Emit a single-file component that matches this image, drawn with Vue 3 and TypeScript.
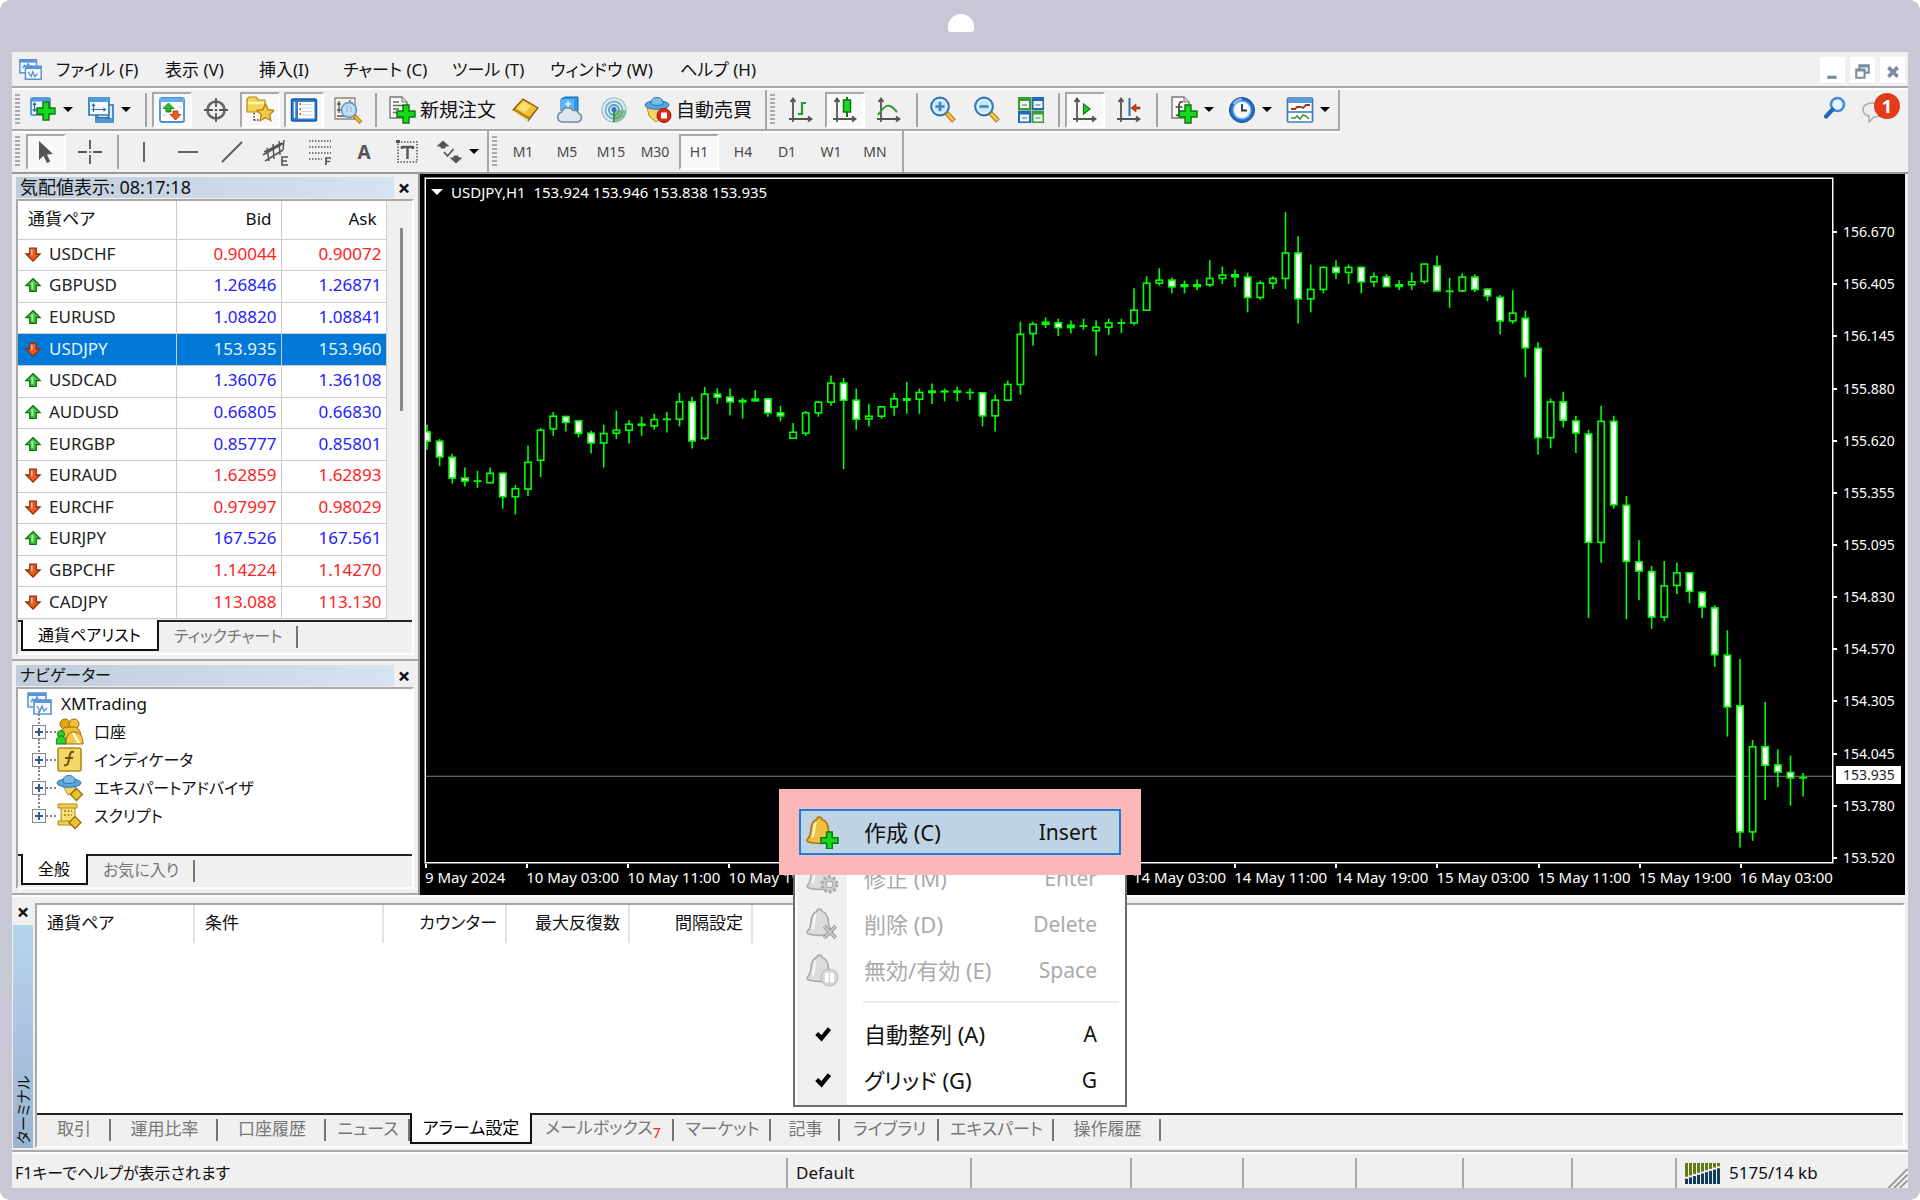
<script setup lang="ts">
import { computed, ref } from 'vue'

type Direction = 'up' | 'down'
interface Quote { symbol: string; bid: string; ask: string; dir: Direction }
interface Tool { id: string; label: string; text?: string; caret?: boolean }
type Kind = 'w' | 'h' | 'd'
type Candle = [Kind, number, number, number, number]

const plus = (x: number, y: number, s: number): string => {
  const t = s / 3
  return `<path d="M${x + t} ${y}h${t}v${t}h${t}v${t}h${-t}v${t}h${-t}v${-t}h${-t}v${-t}h${t}z" fill="#18d81c" stroke="#08780c" stroke-width="1.4"/>`
}
const axes = '<path d="M6 3v23M2 23h22M3.500 6L6 2.500 8.500 6M21 20.500L24.500 23 21 25.500" fill="none" stroke="#555" stroke-width="1.8"/>'
const page = '<path d="M2 1h12l5 5v16H2z" fill="#fafafa" stroke="#777" stroke-width="1.400"/><path d="M14 1v5h5" fill="#ddd" stroke="#777"/>'
const lens = '<circle cx="11" cy="10.500" r="8.800" fill="#c5e5fa" stroke="#3479b8" stroke-width="2.200"/><circle cx="11" cy="10.500" r="6.800" fill="none" stroke="#eef8ff" stroke-width="1.200"/><path d="M17.500 17l7.500 8" stroke="#a87610" stroke-width="5"/><path d="M18 17.500l6.500 7" stroke="#f5c842" stroke-width="3"/>'
const bell = (fill: string, stroke: string): string =>
  `<path d="M13.500 2c1.600 0 2.400.9 2.600 2.200 5 1.400 5.800 6 6 10 .2 4 1.200 6.500 3.400 8.300 1 .9.800 2.500-1 3C19 27.300 8.500 27.300 3.500 25.500 1.800 25 1.600 23.600 2.600 22.500 5 20 5.200 17.500 5.500 14 5.800 9.500 6.800 5.500 11 4.200 11.200 2.900 12 2 13.500 2z" fill="${fill}" stroke="${stroke}" stroke-width="1.500"/><path d="M10 7C8.500 11 8.800 17 7 21" fill="none" stroke="#fff" stroke-opacity=".7" stroke-width="2.400"/>`
const hat = '<ellipse cx="13" cy="9" rx="12" ry="4.300" fill="#58a6dc" stroke="#2b72ad"/><path d="M7 8C7 3 9.500 1.500 13 1.500S19 3 19 8c-3 2-9 2-12 0z" fill="#78bdea" stroke="#2b72ad"/>'
const windows = (c: string): string =>
  `<path d="M2 3h18v14H2z" fill="#eef6fe" stroke="${c}" stroke-width="1.600"/><path d="M2 3h18v3H2z" fill="${c}"/><path d="M5 12l2-3 2 2 2-4 2 4 2-2" fill="none" stroke="${c}" stroke-width="1.400"/><path d="M8 10h17v14H8z" fill="#f7fbff" stroke="${c}" stroke-width="1.600"/><path d="M8 10h17v3H8z" fill="${c}"/><path d="M11 16l3 5 2-5 2 5 3-3" fill="none" stroke="${c}" stroke-width="1.400"/>`

const icons: Record<string, string> = {
  app: windows('#5a93d6'),
  newchart: `<rect x="2" y="2" width="19" height="17" rx="1" fill="#eaf4fd" stroke="#3f82c4" stroke-width="1.600"/><path d="M2 2h19v3.500H2z" fill="#4f9ae0"/><path d="M5.500 7v9M3.500 14h12M4 9l1.500-2L7 9" fill="none" stroke="#3c6e9c" stroke-width="1.300"/>${plus(8, 6, 18)}`,
  profiles: '<path d="M9 9h17v17H9z" fill="#e2effb" stroke="#2f78bd" stroke-width="1.700"/><path d="M9 22h17v4H9z" fill="#4f97da"/><path d="M2 2h20v17H2z" fill="#f4f9fe" stroke="#2f78bd" stroke-width="1.700"/><path d="M2 2h20v4H2z" fill="#4f9ae0"/><path d="M6.500 8v8M4.500 13.500h14M5 10l1.500-2L8 10M16.500 12l2 1.500-2 1.500M11 19v4M9 21.500h13M20.500 20l2 1.500-2 1.500" fill="none" stroke="#3c6e9c" stroke-width="1.200"/>',
  market: '<rect x="2" y="2" width="24" height="24" rx="2" fill="#fff" stroke="#4a90d0" stroke-width="1.800"/><path d="M2 2h24v4H2z" fill="#64b0ec"/><path d="M10.500 7l5.500 5.500h-3V16H8v-3.500H5z" fill="#2cb82c" stroke="#137013" stroke-width=".8"/><path d="M17.500 24L12 18.500h3V15h5v3.500h3z" fill="#ef5a1d" stroke="#a33105" stroke-width=".8"/><path d="M4 10h2M4 19h5M19 11h5" stroke="#ccc"/>',
  crosshair: '<circle cx="14" cy="14" r="8.500" fill="none" stroke="#666" stroke-width="2.600"/><path d="M14 2v9M14 17v9M2 14h9M17 14h9" stroke="#555" stroke-width="1.800"/><circle cx="14" cy="14" r="1.300" fill="#555"/>',
  star: '<path d="M1 3l2-2h7l2 3h7v12H1z" fill="#f3d35a" stroke="#b98a14" stroke-width="1.200"/><path d="M2 7h16" stroke="#fff3b0" stroke-width="2.500"/><path d="M8 17v9M8 24h7" stroke="#333" stroke-width="1.400" stroke-dasharray="1.500 1.500"/><path d="M19.500 8l2.700 5.600 6 .8-4.400 4.200 1.100 6.100-5.400-3-5.400 3 1.100-6.100-4.400-4.200 6-.8z" fill="#f2c945" stroke="#ad7e10" stroke-width="1.200"/>',
  data: '<rect x="1.500" y="3" width="25" height="22" rx="1.500" fill="#2d7cc8" stroke="#1b5a9b" stroke-width="1.500"/><path d="M8 6h16.500v16.500H8z" fill="#fff"/><path d="M4.500 6v16" stroke="#e9f4ff" stroke-width="1.600"/><path d="M11.500 8.500h11M11.500 12h11M11.500 15.500h11M11.500 19h11" stroke="#c5d5e5"/><path d="M9.500 7H11v2H9.500zM9.500 12H11v2H9.500zM9.500 17H11v2H9.500z" fill="#e33"/>',
  tester: '<path d="M1 2h20v21H1z" fill="#f5f2ec" stroke="#8e867c" stroke-width="1.300"/><path d="M5 5v12M3 8h4M3 14h4M16 4v8M13.500 7h5M3 20h15" stroke="#555" stroke-width="1.300"/><circle cx="15" cy="14" r="7.500" fill="#bcdcf6" fill-opacity=".9" stroke="#5b9bd0" stroke-width="1.600"/><path d="M13 9v7M17 11v5" stroke="#8db4d4"/><path d="M20 19.500l7 7" stroke="#a87610" stroke-width="4"/><path d="M20.500 20l6 6" stroke="#f2b62e" stroke-width="2.400"/>',
  order: `${page}<path d="M5 6h6M5 9.500h10M5 13h6M5 16.500h4" stroke="#666" stroke-width="1.500"/>${plus(9, 9, 18)}`,
  gold: '<path d="M1 14L11 3l15 9-10 13z" fill="#b97c17" stroke="#8a5508" stroke-width="1.200"/><path d="M3 13L11 4l14 8-8 9z" fill="#f0c02f"/><path d="M5 12.500L11.500 5.500 19 10l-6 7z" fill="#f9e06a"/><path d="M1 15l15 9.500" stroke="#f7e4a0" stroke-width="2"/>',
  cloud: '<path d="M5 3l4-2h13v14H5z" fill="#2f96ea" stroke="#1766b0"/><path d="M5 3h13v12H5z" fill="#5bb6f6"/><path d="M9 8h6M12 5v6" stroke="#e8f6ff" stroke-width="1.600"/><path d="M6 26a5 5 0 01-.5-9.800A6.500 6.500 0 0117 14.500a5 5 0 015.500 2.700A4.600 4.600 0 0122 26z" fill="#dde5ee" stroke="#7488a3" stroke-width="1.500"/>',
  radio: '<circle cx="14" cy="14" r="12" fill="#e3eef4" stroke="#a3c8d2" stroke-width="1.600"/><circle cx="14" cy="14" r="8.500" fill="none" stroke="#79b0d0" stroke-width="1.800"/><circle cx="14" cy="14" r="5" fill="none" stroke="#4e93c4" stroke-width="1.800"/><path d="M14 14h12a12 12 0 01-12 12z" fill="#59aa4e" fill-opacity=".6"/><path d="M14 14v12" stroke="#2f9a2f" stroke-width="2"/><circle cx="14" cy="13.500" r="2.600" fill="#2f76c0"/>',
  expert: `<path d="M3 11h19l-2 9-8 6-7-6z" fill="#f2d565" stroke="#b38a1c"/>${hat}<circle cx="20" cy="19.500" r="7" fill="#dc2a12" stroke="#a01a08"/><rect x="17" y="16.500" width="6" height="6" fill="#fff"/>`,
  bars: `${axes}<path d="M15 6v13M15 7h4M11 18h4" fill="none" stroke="#2a9a2a" stroke-width="2.200"/>`,
  candles: `${axes}<path d="M16 1v20" stroke="#087a0b" stroke-width="2"/><rect x="12.500" y="4" width="7" height="12" fill="#20d828" stroke="#087a0b" stroke-width="1.500"/>`,
  line: `${axes}<path d="M3 19c4-6 8-11 12-9 3 1 5 4 7 6" fill="none" stroke="#2a9a2a" stroke-width="2"/>`,
  zoomin: `${lens}<path d="M6.500 10.500h9M11 6v9" stroke="#3f83bc" stroke-width="2.600"/>`,
  zoomout: `${lens}<path d="M6.500 10.500h9" stroke="#3f83bc" stroke-width="2.600"/>`,
  tiles: '<path d="M1 1h13v13H1z" fill="#3d9a2e"/><path d="M14.500 1H27v13H14.500z" fill="#2468bd"/><path d="M1 14.500h13V27H1z" fill="#2468bd"/><path d="M14.500 14.500H27V27H14.500z" fill="#3d9a2e"/><path d="M3 5h9v7H3zM16.500 5h9v7h-9zM3 18.500h9v7H3zM16.500 18.500h9v7h-9z" fill="#eef5ee"/><path d="M5 9h5M18.500 9h5M5 22h5M18.500 22h5" stroke="#7aa3c4" stroke-width="1.500"/>',
  autoscroll: `${axes}<path d="M12.500 8l6.500 5-6.500 5z" fill="#28c728" stroke="#127a12" stroke-width="1.200"/>`,
  shift: `${axes}<path d="M14.500 2v18" stroke="#2d6fb4" stroke-width="2"/><path d="M16 12l5-4v3h4v2h-4v3z" fill="#c6400f" stroke="#8d2a05" stroke-width=".6"/>`,
  indicators: `${page}<path d="M13 6c-3-1-4 1-4 4v7c0 2-1 3-3 2M5.500 11h7" fill="none" stroke="#444" stroke-width="1.700"/>${plus(9, 9, 18)}`,
  clock: '<circle cx="14" cy="14" r="12.500" fill="#1e6fc8" stroke="#124e94"/><circle cx="14" cy="14" r="8.800" fill="#f3f8fd" stroke="#7db6ea" stroke-width="1.400"/><path d="M14 8v6.500h5" fill="none" stroke="#333" stroke-width="1.800"/><path d="M5.500 8A11 11 0 0114 3" fill="none" stroke="#8cc3f5" stroke-width="2"/>',
  template: '<rect x="1.500" y="2" width="25" height="24" rx="1" fill="#fff" stroke="#3c7dbd" stroke-width="1.700"/><path d="M2 2h24v5H2z" fill="#5a9cda"/><path d="M2 16h24" stroke="#3c7dbd" stroke-width="1.600"/><path d="M5 13h4l2-2h4l2 1 3-3h4" fill="none" stroke="#a33415" stroke-width="1.800"/><path d="M5 22h4l2-2 3 3 3-4 3 1 3 3" fill="none" stroke="#3a9a3a" stroke-width="1.600"/>',
  cursor: '<path d="M7 3v19l4.500-4.200L15 25l3.200-1.500-3.300-7L21 16z" fill="#555"/>',
  cross: '<path d="M14 2v9M14 17v9M2 14h9M17 14h9" stroke="#555" stroke-width="1.800"/><circle cx="14" cy="14" r="1" fill="#555"/>',
  vline: '<path d="M14 4v20" stroke="#555" stroke-width="1.800"/>',
  hline: '<path d="M4 14h20" stroke="#555" stroke-width="1.800"/>',
  trend: '<path d="M4 24L24 4" stroke="#555" stroke-width="1.800"/>',
  channel: '<path d="M1 17L22 5M3 23L21 12M5 10l2 13M11 6l1 15M17 3l1 14M22 2l-1 10M2 14l18-9" fill="none" stroke="#555" stroke-width="1.500"/><path d="M26 19h-6v8h6M20 23h5" fill="none" stroke="#555" stroke-width="1.600"/>',
  fibo: '<path d="M3 3h22M3 9h22M3 15h22M3 21h13" stroke="#555" stroke-width="1.600" stroke-dasharray="1.500 1.500"/><path d="M25 20h-5v7M20 23.500h4" fill="none" stroke="#555" stroke-width="1.700"/>',
  label: '<rect x="4" y="4" width="19" height="20" fill="none" stroke="#555" stroke-width="1.500" stroke-dasharray="1.500 1.500"/><path d="M8 9h11M13.500 9v12M8 8v3M19 8v3" fill="none" stroke="#555" stroke-width="2.400"/><path d="M2 2h4v3H2z" fill="#555"/>',
  shapes: '<path d="M8 3l5.500 5H10v2H6V8H2.500zM21 25l-5.500-5H19v-2h4v2h3.500z" fill="#555" stroke="#555"/><path d="M9 14l3.500 4 6-7" fill="none" stroke="#555" stroke-width="1.800"/>',
  search: '<circle cx="17.500" cy="9.500" r="6.500" fill="#eaf6ff" stroke="#3f8edb" stroke-width="2.600"/><path d="M12.500 14.500L6 21.500" stroke="#2166b8" stroke-width="4.200" stroke-linecap="round"/>',
  bubble: '<path d="M11 8c6 0 10 2 10 7s-4 7-9 7l-5 5v-6C3 20 1 18 1 15c0-5 4-7 10-7z" fill="#eceef2" stroke="#aaa" stroke-width="1.400"/>',
  down: '<path d="M14 25L3 14h6V5h10v9h6z" fill="#ee5a22" stroke="#8f2f08" stroke-width="2"/><path d="M12 7v9" stroke="#ffb08a" stroke-width="3"/>',
  up: '<path d="M14 4l11 11h-6v9H9v-9H3z" fill="#3cc83c" stroke="#0d6d12" stroke-width="2"/><path d="M13 9v11" stroke="#a8f0a0" stroke-width="3"/>',
  accounts: '<circle cx="9" cy="6" r="5" fill="#e3a91b" stroke="#9a6a08"/><circle cx="18" cy="6" r="5" fill="#f0c23c" stroke="#9a6a08"/><path d="M4 20c0-8 3-11 8-11h6c5 0 7 5 7 11z" fill="#eebc34" stroke="#9a6a08"/><circle cx="5" cy="16" r="3.500" fill="#2fd12f" stroke="#0c7c10"/><path d="M0 26c0-6 2-8 5-8s5 3 5 8z" fill="#2fd12f" stroke="#0c7c10"/><path d="M10 26c0-8 3-12 8-12 6 0 9 4 9 12z" fill="#f3ca4c" stroke="#9a6a08"/><path d="M17 15l6 10" stroke="#fff" stroke-width="2"/>',
  func: '<rect x="2" y="2" width="23" height="23" rx="2" fill="#f3d768" stroke="#b58a15" stroke-width="1.600"/><path d="M18 6c-4-1-4 2-5 7s-1 7-5 6M9 12h8" fill="none" stroke="#6d5108" stroke-width="2"/>',
  advisor: `<path d="M6 10h15l-3 7-6 4z" fill="#f2d565" stroke="#b38a1c"/>${hat}<path d="M20.500 14.500l6 6-6 6-6-6z" fill="#edc12e" stroke="#94700f" stroke-width="1.300"/>`,
  script: '<path d="M5 4h14v17H5z" fill="#f6e07c" stroke="#b58a15"/><path d="M2 2h19v4H2zM2 19h16v4H2z" fill="#efcf54" stroke="#b58a15"/><path d="M8 9h8M8 13h8" stroke="#a07a18" stroke-width="1.600" stroke-dasharray="2 1.500"/><path d="M19 14.500l6 6-6 6-6-6z" fill="#edc12e" stroke="#94700f" stroke-width="1.300"/>',
  bellAdd: `${bell('#f0c040', '#b1760b')}${plus(15, 16, 16)}`,
  bellEdit: `${bell('#dcdcdc', '#aaa')}<circle cx="23" cy="22" r="7" fill="#ccc" stroke="#aaa" stroke-width="3" stroke-dasharray="2.500 2"/><circle cx="23" cy="22" r="3" fill="#eee" stroke="#aaa"/>`,
  bellRemove: `${bell('#dcdcdc', '#aaa')}<path d="M18 18l11 11M29 18L18 29" stroke="#999" stroke-width="3.500"/><path d="M18 18l11 11M29 18L18 29" stroke="#ccc" stroke-width="1.500"/>`,
  bellPause: `${bell('#dcdcdc', '#aaa')}<circle cx="23" cy="23" r="8" fill="#d8d8d8" stroke="#bbb"/><path d="M20.500 18.500v9M25.500 18.500v9" stroke="#fff" stroke-width="3.500"/>`,
  check: '<path d="M11 15.500l4.500 4.500L23 11" fill="none" stroke="#000" stroke-width="4"/>',
}

const menus = ['ファイル (F)', '表示 (V)', '挿入(I)', 'チャート (C)', 'ツール (T)', 'ウィンドウ (W)', 'ヘルプ (H)']

const standardTools: Tool[][] = [
  [
    { id: 'newchart', label: '新規チャート', caret: true },
    { id: 'profiles', label: 'チャートの組表示', caret: true },
  ],
  [
    { id: 'market', label: '気配値表示' },
    { id: 'crosshair', label: 'データウィンドウ' },
    { id: 'star', label: 'ナビゲーター' },
    { id: 'data', label: 'ターミナル' },
    { id: 'tester', label: 'ストラテジーテスター' },
  ],
  [
    { id: 'order', label: '新規注文', text: '新規注文' },
    { id: 'gold', label: 'メタエディター' },
    { id: 'cloud', label: 'クラウド' },
    { id: 'radio', label: 'シグナル' },
    { id: 'expert', label: '自動売買', text: '自動売買' },
  ],
]
const chartTools: Tool[][] = [
  [
    { id: 'bars', label: 'バーチャート' },
    { id: 'candles', label: 'ローソク足' },
    { id: 'line', label: 'ラインチャート' },
  ],
  [
    { id: 'zoomin', label: '拡大' },
    { id: 'zoomout', label: '縮小' },
    { id: 'tiles', label: '整列' },
  ],
  [
    { id: 'autoscroll', label: '自動スクロール' },
    { id: 'shift', label: 'チャートシフト' },
  ],
  [
    { id: 'indicators', label: 'インディケータ', caret: true },
    { id: 'clock', label: '時間足設定', caret: true },
    { id: 'template', label: '定型チャート', caret: true },
  ],
]
const lineTools: Tool[][] = [
  [
    { id: 'cursor', label: 'カーソル' },
    { id: 'cross', label: 'クロスヘアカーソル' },
  ],
  [
    { id: 'vline', label: '垂直線' },
    { id: 'hline', label: '水平線' },
    { id: 'trend', label: 'トレンドライン' },
    { id: 'channel', label: 'チャネル' },
    { id: 'fibo', label: 'フィボナッチ' },
    { id: 'text', label: 'テキスト' },
    { id: 'label', label: 'ラベル' },
    { id: 'shapes', label: '矢印', caret: true },
  ],
]
const pressed = ref(new Set(['market', 'star', 'data', 'candles', 'autoscroll', 'cursor']))
const periods = ['M1', 'M5', 'M15', 'M30', 'H1', 'H4', 'D1', 'W1', 'MN']
const period = ref('H1')

const quotes: Quote[] = [
  { symbol: 'USDCHF', bid: '0.90044', ask: '0.90072', dir: 'down' },
  { symbol: 'GBPUSD', bid: '1.26846', ask: '1.26871', dir: 'up' },
  { symbol: 'EURUSD', bid: '1.08820', ask: '1.08841', dir: 'up' },
  { symbol: 'USDJPY', bid: '153.935', ask: '153.960', dir: 'down' },
  { symbol: 'USDCAD', bid: '1.36076', ask: '1.36108', dir: 'up' },
  { symbol: 'AUDUSD', bid: '0.66805', ask: '0.66830', dir: 'up' },
  { symbol: 'EURGBP', bid: '0.85777', ask: '0.85801', dir: 'up' },
  { symbol: 'EURAUD', bid: '1.62859', ask: '1.62893', dir: 'down' },
  { symbol: 'EURCHF', bid: '0.97997', ask: '0.98029', dir: 'down' },
  { symbol: 'EURJPY', bid: '167.526', ask: '167.561', dir: 'up' },
  { symbol: 'GBPCHF', bid: '1.14224', ask: '1.14270', dir: 'down' },
  { symbol: 'CADJPY', bid: '113.088', ask: '113.130', dir: 'down' },
]
const selected = ref('USDJPY')

const navItems = [
  { icon: 'accounts', label: '口座' },
  { icon: 'func', label: 'インディケータ' },
  { icon: 'advisor', label: 'エキスパートアドバイザ' },
  { icon: 'script', label: 'スクリプト' },
]

/* Candles are [kind, high, body top, body bottom, low]; w = bearish, h = bullish, d = doji.
   Each session has its own origin and units per pixel. */
const sessions: { origin: number; units: number; rows: Candle[] }[] = [
  {
    origin: 171,
    units: 3,
    rows: [
      ['w', 222, 242, 273, 297], ['w', 265, 270, 320, 346], ['w', 309, 318, 383, 398], ['w', 350, 380, 392, 407],
      ['d', 360, 389, 392, 411], ['h', 350, 366, 397, 397], ['w', 364, 366, 439, 473], ['h', 402, 412, 439, 491],
      ['h', 284, 333, 416, 435], ['h', 232, 237, 330, 379], ['h', 184, 195, 236, 255], ['w', 195, 196, 216, 242],
      ['w', 208, 209, 249, 260], ['w', 240, 246, 278, 308], ['h', 222, 247, 278, 350], ['h', 180, 237, 249, 265],
      ['h', 208, 219, 240, 278], ['d', 198, 219, 225, 255], ['h', 189, 205, 227, 237], ['d', 184, 204, 206, 245],
      ['h', 127, 152, 207, 227], ['w', 138, 152, 272, 293], ['h', 109, 129, 264, 269], ['w', 113, 129, 141, 160],
      ['w', 114, 138, 155, 194], ['d', 142, 148, 155, 204], ['d', 118, 144, 152, 152], ['w', 142, 143, 188, 198],
      ['w', 165, 185, 197, 212], ['h', 217, 243, 264, 264], ['h', 181, 185, 249, 255], ['h', 151, 153, 188, 198],
      ['h', 75, 96, 156, 165], ['w', 82, 96, 150, 355], ['w', 114, 147, 207, 237], ['h', 160, 195, 206, 227],
      ['h', 166, 167, 198, 204], ['h', 127, 143, 170, 195], ['d', 94, 143, 150, 189], ['h', 114, 124, 147, 189],
      ['d', 99, 120, 127, 160], ['d', 114, 120, 125, 152], ['d', 108, 120, 126, 152], ['d', 114, 124, 126, 147],
      ['w', 124, 125, 197, 227], ['h', 132, 147, 197, 242], ['h', 90, 100, 150, 150],
    ],
  },
  {
    origin: 11,
    units: 3,
    rows: [
      ['h', 394, 430, 583, 612], ['h', 394, 400, 431, 466], ['d', 381, 394, 403, 413], ['w', 385, 396, 413, 437],
      ['d', 390, 403, 413, 429], ['d', 385, 405, 407, 418], ['h', 390, 409, 422, 495], ['h', 385, 396, 412, 433],
      ['d', 385, 396, 399, 428], ['h', 294, 358, 399, 405], ['h', 258, 277, 361, 361], ['h', 234, 268, 280, 286],
      ['w', 262, 268, 291, 309], ['d', 271, 282, 290, 309], ['d', 267, 282, 290, 299], ['h', 210, 263, 285, 290],
      ['h', 229, 253, 266, 281], ['d', 238, 252, 261, 290], ['w', 247, 259, 323, 366], ['h', 271, 277, 323, 328],
      ['h', 258, 263, 280, 296], ['h', 66, 187, 266, 296], ['w', 138, 187, 327, 399], ['h', 223, 296, 327, 366],
      ['h', 229, 230, 299, 309], ['w', 210, 230, 248, 266], ['h', 223, 230, 248, 281], ['w', 229, 230, 276, 309],
      ['h', 247, 258, 276, 290], ['w', 252, 259, 290, 290], ['d', 270, 282, 290, 299], ['h', 247, 273, 285, 299],
      ['h', 220, 220, 275, 281], ['w', 196, 226, 303, 305], ['d', 262, 301, 303, 352], ['h', 249, 259, 303, 305],
      ['w', 252, 259, 299, 305], ['w', 294, 295, 318, 333], ['w', 314, 320, 393, 432], ['h', 300, 367, 393, 400],
    ],
  },
  {
    origin: 61,
    units: 2.376,
    rows: [
      ['w', 167, 184, 256, 325], ['w', 242, 255, 469, 508], ['h', 375, 382, 469, 493], ['w', 359, 382, 428, 444],
      ['w', 416, 427, 458, 504], ['w', 449, 458, 717, 895], ['h', 392, 428, 717, 764], ['w', 416, 428, 628, 636],
      ['w', 606, 627, 762, 898], ['w', 711, 761, 785, 853], ['w', 772, 784, 894, 921], ['h', 760, 818, 894, 903],
      ['h', 764, 787, 819, 839], ['w', 786, 787, 833, 860], ['w', 832, 833, 870, 895], ['w', 865, 870, 983, 1011],
      ['w', 924, 982, 1107, 1176], ['w', 992, 1102, 1403, 1439], ['h', 1184, 1199, 1403, 1423], ['w', 1094, 1199, 1245, 1326],
      ['w', 1206, 1242, 1261, 1296], ['w', 1221, 1260, 1275, 1340], ['d', 1262, 1272, 1275, 1318],
    ],
  },
]
const candles = computed(() => {
  const firstX = 1
  const step = 12.625
  return sessions
    .flatMap(s => s.rows.map(([kind, ...ys]) => ({ kind, ys: ys.map(y => s.origin + y / s.units) })))
    .map((c, i) => ({ kind: c.kind, x: firstX + i * step, high: c.ys[0], top: c.ys[1], bottom: c.ys[2], low: c.ys[3] }))
})
const fills: Record<Kind, string> = { w: '#fff', h: '#000', d: '#0f0' }

const prices = ['156.670', '156.405', '156.145', '155.880', '155.620', '155.355', '155.095', '154.830', '154.570', '154.305', '154.045', '153.780', '153.520']
/* Marks that lie behind the open menu carry no caption. */
const times = ['9 May 2024', '10 May 03:00', '10 May 11:00', '10 May 19:00', '', '', '', '14 May 03:00', '14 May 11:00', '14 May 19:00', '15 May 03:00', '15 May 11:00', '15 May 19:00', '16 May 03:00']

const alertColumns = ['通貨ペア', '条件', 'カウンター', '最大反復数', '間隔設定']
const terminalTabs = [
  { name: '取引', width: 74 },
  { name: '運用比率', width: 107 },
  { name: '口座履歴', width: 108 },
  { name: 'ニュース', width: 84 },
  { name: 'アラーム設定', width: 122 },
  { name: 'メールボックス', width: 142, count: 7 },
  { name: 'マーケット', width: 97 },
  { name: '記事', width: 69 },
  { name: 'ライブラリ', width: 99 },
  { name: 'エキスパート', width: 115 },
  { name: '操作履歴', width: 107 },
]
const terminalTab = ref('アラーム設定')

const contextMenu = [
  { icon: 'bellAdd', label: '作成 (C)', key: 'Insert', state: 'active' },
  { icon: 'bellEdit', label: '修正 (M)', key: 'Enter', state: 'off' },
  { icon: 'bellRemove', label: '削除 (D)', key: 'Delete', state: 'off' },
  { icon: 'bellPause', label: '無効/有効 (E)', key: 'Space', state: 'off' },
  { icon: '', label: '', key: '', state: 'rule' },
  { icon: 'check', label: '自動整列 (A)', key: 'A', state: '' },
  { icon: 'check', label: 'グリッド (G)', key: 'G', state: '' },
]
</script>

<template>
  <div class="device">
    <span class="camera"></span>
    <div class="window">
      <header class="menubar">
        <svg class="app-icon" viewBox="0 0 28 28" v-html="icons.app"></svg>
        <nav class="menus">
          <button v-for="m in menus" :key="m">{{ m }}</button>
        </nav>
        <div class="window-buttons">
          <button aria-label="最小化"><svg viewBox="0 0 24 24"><path d="M7 17h9v3H7z" fill="#7a8ca0" /></svg></button>
          <button aria-label="元に戻す"><svg viewBox="0 0 24 24"><path d="M9 10V7h9v7h-3M6 11h8v8H6zM6 12h8M9 8h9" fill="none" stroke="#7a8ca0" stroke-width="2" /></svg></button>
          <button aria-label="閉じる"><svg viewBox="0 0 24 24"><path d="M8 9l9 9M17 9l-9 9" stroke="#7a8ca0" stroke-width="3.500" /></svg></button>
        </div>
      </header>

      <div class="toolrow">
        <div v-for="(bar, b) in [standardTools, chartTools]" :key="b" class="toolbar">
          <span class="grip"></span>
          <template v-for="(group, g) in bar" :key="g">
            <span v-if="g" class="divider"></span>
            <button v-for="t in group" :key="t.id" :aria-label="t.label" class="tool" :class="{ split: t.caret, wide: t.text, pressed: pressed.has(t.id) }">
              <svg class="glyph" viewBox="0 0 28 28" v-html="icons[t.id]"></svg>
              <span v-if="t.text">{{ t.text }}</span>
              <i v-if="t.caret" class="caret"></i>
            </button>
          </template>
        </div>
        <div class="notices">
          <button aria-label="検索"><svg class="glyph" viewBox="0 0 28 28" v-html="icons.search"></svg></button>
          <button aria-label="通知" class="notify"><svg class="glyph" viewBox="0 0 28 28" v-html="icons.bubble"></svg><b>1</b></button>
        </div>
      </div>

      <div class="toolrow second">
        <div class="toolbar lines">
          <span class="grip"></span>
          <template v-for="(group, g) in lineTools" :key="g">
            <span v-if="g" class="divider"></span>
            <button v-for="t in group" :key="t.id" :aria-label="t.label" class="tool" :class="{ split: t.caret, pressed: pressed.has(t.id) }">
              <strong v-if="t.id === 'text'">A</strong>
              <svg v-else class="glyph" viewBox="0 0 28 28" v-html="icons[t.id]"></svg>
              <i v-if="t.caret" class="caret"></i>
            </button>
          </template>
        </div>
        <div class="toolbar">
          <span class="grip"></span>
          <button v-for="p in periods" :key="p" class="tool period" :class="{ pressed: p === period }" @click="period = p">{{ p }}</button>
        </div>
      </div>

      <main class="workspace">
        <aside class="side">
          <section class="panel quotes">
            <h2><span>気配値表示: 08:17:18</span><button class="close" aria-label="閉じる">×</button></h2>
            <div class="panel-body">
              <div class="scroller">
                <table>
                  <thead><tr><th>通貨ペア</th><th>Bid</th><th>Ask</th></tr></thead>
                  <tbody>
                    <tr v-for="q in quotes" :key="q.symbol" :class="[q.dir, { selected: q.symbol === selected }]" @click="selected = q.symbol">
                      <td><span class="symbol"><svg viewBox="0 0 28 28" v-html="icons[q.dir]"></svg>{{ q.symbol }}</span></td>
                      <td>{{ q.bid }}</td>
                      <td>{{ q.ask }}</td>
                    </tr>
                  </tbody>
                </table>
                <div class="scrollbar"><i></i></div>
              </div>
              <div class="tabs">
                <button class="tab on">通貨ペアリスト</button>
                <button class="tab">ティックチャート</button>
              </div>
            </div>
          </section>
          <section class="panel navigator">
            <h2><span>ナビゲーター</span><button class="close" aria-label="閉じる">×</button></h2>
            <div class="panel-body">
              <div class="tree">
                <p><svg viewBox="0 0 28 28" v-html="icons.app"></svg>XMTrading</p>
                <ul>
                  <li v-for="n in navItems" :key="n.label">
                    <button class="expand" :aria-label="n.label + 'を展開'"></button>
                    <svg viewBox="0 0 28 28" v-html="icons[n.icon]"></svg>
                    <span>{{ n.label }}</span>
                  </li>
                </ul>
              </div>
              <div class="tabs">
                <button class="tab on">全般</button>
                <button class="tab">お気に入り</button>
              </div>
            </div>
          </section>
        </aside>

        <section class="chart">
          <div class="plot-col">
            <div class="plot">
              <svg viewBox="0 0 1406 681" preserveAspectRatio="none">
                <path d="M0 595.500H1406" stroke="#75838a" />
                <g v-for="(c, i) in candles" :key="i" stroke="#0f0" stroke-width="1.600">
                  <path :d="`M${c.x} ${c.high}V${c.low}`" />
                  <rect :x="c.x - 3.2" :y="c.top + 0.5" width="6.400" :height="Math.max(c.bottom - c.top - 1, 0.2)" :fill="fills[c.kind]" />
                </g>
              </svg>
              <p class="legend"><i class="caret"></i>USDJPY,H1&nbsp; 153.924 153.946 153.838 153.935</p>
            </div>
            <div class="time-axis"><span v-for="(t, i) in times" :key="i">{{ t }}</span></div>
          </div>
          <div class="price-axis">
            <span v-for="p in prices" :key="p">{{ p }}</span>
            <b>153.935</b>
          </div>
        </section>
      </main>

      <section class="terminal">
        <div class="terminal-handle">
          <button class="close" aria-label="閉じる">×</button>
          <h2>ターミナル</h2>
        </div>
        <div class="terminal-body">
          <div class="alerts">
            <table>
              <thead><tr><th v-for="c in alertColumns" :key="c">{{ c }}</th></tr></thead>
            </table>
          </div>
          <div class="tabs">
            <button v-for="t in terminalTabs" :key="t.name" class="tab" :class="{ on: t.name === terminalTab }" :style="{ width: t.width + 'px' }" @click="terminalTab = t.name">
              {{ t.name }}<sub v-if="t.count">{{ t.count }}</sub>
            </button>
          </div>
        </div>
      </section>

      <footer class="status">
        <span class="hint">F1キーでヘルプが表示されます</span>
        <span>Default</span>
        <span></span><span></span><span></span><span></span><span></span>
        <span></span>
        <span class="traffic">
          <svg viewBox="0 0 36 21">
            <template v-for="n in 9" :key="n">
              <rect :x="(n - 1) * 4" y="0" width="3" :height="15 - n * 1.3" fill="#617d11" />
              <rect :x="(n - 1) * 4" :y="17 - n * 1.3" width="3" :height="4 + n * 1.3" fill="#123c5e" />
            </template>
          </svg>
          5175/14 kb
          <svg class="resize" viewBox="0 0 22 22"><path d="M2 22L22 2M8 22L22 8M14 22l8-8" stroke="#999" stroke-width="2" /></svg>
        </span>
      </footer>

      <ul class="context-menu">
        <li v-for="(m, i) in contextMenu" :key="i" :class="m.state">
          <button v-if="m.label" :disabled="m.state === 'off'">
            <svg viewBox="0 0 32 32" v-html="icons[m.icon]"></svg>
            <span>{{ m.label }}</span>
            <kbd>{{ m.key }}</kbd>
          </button>
          <hr v-else />
        </li>
      </ul>
    </div>
  </div>
</template>

<style>
body {
  margin: 0;
  background: #fff;
}
</style>

<style scoped>
* {
  box-sizing: border-box;
}
button {
  padding: 0;
  border: 0;
  background: none;
  color: inherit;
  font: inherit;
  font-feature-settings: inherit;
  white-space: nowrap;
}
h2, p, ul {
  margin: 0;
  padding: 0;
  font-weight: 400;
  list-style: none;
}
svg {
  display: block;
  flex: none;
}
.device {
  position: relative;
  display: flex;
  min-height: 100vh;
  padding: 52px 12px 12px;
  border-radius: 10px;
  background: #c8c7d5;
  color: #111;
  font: 17px/24px "Noto Sans", "Noto Sans CJK JP", sans-serif;
  font-feature-settings: "palt";
}
.camera {
  position: absolute;
  top: 14px;
  left: 50%;
  width: 26px;
  height: 18px;
  margin-left: -12px;
  border-radius: 13px 13px 3px 3px;
  background: #fff;
}
.window {
  position: relative;
  display: flex;
  flex: 1;
  flex-direction: column;
  min-width: 0;
  background: #f0f0f0;
}
.menubar {
  display: flex;
  align-items: center;
  height: 38px;
  padding: 0 3px 0 6px;
  border-bottom: 2px solid #fff;
  box-shadow: inset 0 -2px #a8a8a8;
}
.app-icon {
  width: 26px;
  height: 26px;
  margin-right: 12px;
}
.menus {
  display: grid;
  flex: 1;
  grid-template-columns: 109px 94px 84px 109px 98px 130px 1fr;
}
.menus button {
  text-align: left;
}
.window-buttons {
  display: flex;
  gap: 5px;
}
.window-buttons button {
  width: 25px;
  height: 26px;
  background: #fff;
}
.toolrow {
  display: flex;
  height: 41px;
}
.toolrow.second {
  height: 43px;
  border-bottom: 2px solid #999;
}
.toolbar {
  display: flex;
  align-items: center;
  gap: 4px;
  padding: 0 7px 0 3px;
  border-right: 2px solid #a8a8a8;
  border-bottom: 2px solid #a8a8a8;
  box-shadow: 0 2px #fff;
}
.second .toolbar {
  border-bottom: 0;
  box-shadow: none;
}
.grip {
  width: 5px;
  height: 31px;
  margin-right: 2px;
  background: repeating-linear-gradient(#aaa 0 2px, #f0f0f0 2px 4px);
}
.divider {
  width: 2px;
  height: 34px;
  margin: 0 1px 0 3px;
  background: #a5a5a5;
}
.tool {
  display: flex;
  align-items: center;
  justify-content: center;
  width: 40px;
  height: 36px;
}
.tool.split {
  justify-content: flex-start;
  gap: 6px;
  width: 54px;
  padding-left: 3px;
}
.divider + .split {
  margin-left: 4px;
}
.split:last-child {
  margin-right: -6px;
}
.tool.wide {
  gap: 4px;
  width: 120px;
  font-size: 19px;
}
.pressed {
  border: 2px solid #fff;
  border-top-color: #a8a8a8;
  border-left-color: #a8a8a8;
  background: #f8f8f8;
}
.glyph {
  width: 28px;
  height: 28px;
}
.caret {
  width: 0;
  border: 5px solid transparent;
  border-top-color: #000;
  border-bottom: 0;
}
.tool strong {
  color: #555;
  font-size: 19px;
}
.period {
  color: #4a4a4a;
  font-size: 14px;
}
.notices {
  display: flex;
  flex: 1;
  justify-content: flex-end;
  gap: 14px;
  padding: 5px 18px 0 0;
}
.notices button {
  position: relative;
  height: 28px;
}
.notify b {
  position: absolute;
  top: -2px;
  left: 12px;
  width: 26px;
  border-radius: 13px;
  background: #e23b1c;
  color: #fff;
  font-size: 18px;
  line-height: 26px;
}
.workspace {
  display: flex;
  flex: 1;
}
.side {
  display: flex;
  flex-direction: column;
  width: 408px;
  border-right: 2px solid #999;
}
.panel {
  display: flex;
  flex-direction: column;
  padding: 2px 4px 4px;
  border-bottom: 2px solid #a8a8a8;
}
.quotes {
  height: 487px;
}
.navigator {
  flex: 1;
  padding-top: 3px;
}
.panel h2 {
  display: flex;
  align-items: center;
  height: 22px;
  margin-bottom: 1px;
  font-size: 18px;
}
.navigator h2 {
  font-size: 16px;
}
.panel h2 span {
  flex: 1;
  padding-left: 4px;
  background: linear-gradient(90deg, #bfcddc, #d6e4f1);
  line-height: 21px;
}
.close {
  width: 20px;
  font-size: 22px;
  font-weight: 700;
  line-height: 20px;
}
.panel-body {
  display: flex;
  flex: 1;
  flex-direction: column;
  border: 2px solid #fff;
  border-top-color: #a8a8a8;
  border-left-color: #a8a8a8;
}
.scroller {
  display: flex;
  flex: 1;
}
table {
  border-collapse: collapse;
}
.quotes table {
  width: 368px;
  height: 418px;
  background: #fff;
  table-layout: fixed;
}
.quotes thead {
  height: 38px;
}
.quotes th, .quotes td {
  width: 105px;
  padding: 0 4px 2px;
  border-right: 1px solid #ccc;
  border-bottom: 1px solid #ccc;
  text-align: right;
}
.quotes th {
  padding-right: 9px;
  font-weight: 400;
}
.quotes th:first-child {
  width: 158px;
  padding-left: 10px;
  text-align: left;
}
.quotes td:first-child {
  color: #222;
  text-align: left;
}
.symbol {
  display: flex;
  align-items: center;
  gap: 7px;
}
.symbol svg {
  width: 18px;
  height: 18px;
  margin-left: 2px;
}
.down td {
  color: #f22;
}
.up td {
  color: #22f;
}
.quotes .selected td {
  background: #0078d7;
  color: #e6f3ff;
}
.scrollbar i {
  display: block;
  width: 3px;
  height: 183px;
  margin: 27px 13px;
  background: #888;
}
.tabs {
  display: flex;
  height: 33px;
  padding-left: 3px;
  border-top: 2px solid #222;
  background: #f0f0f0;
  color: #777;
}
.side .tabs {
  font-size: 16px;
}
.tab {
  position: relative;
  height: 29px;
  padding: 0 16px 2px 15px;
}
.tab::after {
  position: absolute;
  top: 4px;
  right: 0;
  width: 2px;
  height: 22px;
  background: #777;
  content: "";
}
.tab.on {
  height: 31px;
  margin-top: -2px;
  padding-bottom: 0;
  border: solid #111;
  border-width: 0 2px 2px;
  background: #fff;
  color: #000;
}
.tab.on::after {
  display: none;
}
.tree {
  flex: 1;
  padding: 1px 0 0 8px;
  background: #fff;
}
.tree p {
  display: flex;
  align-items: center;
  gap: 7px;
  height: 28px;
}
.tree svg {
  width: 28px;
  height: 28px;
}
.tree li {
  display: flex;
  align-items: center;
  height: 28px;
  font-size: 16px;
}
.tree li::before {
  order: 1;
  width: 10px;
  border-top: 2px dotted #888;
  content: "";
}
.tree li svg {
  order: 2;
}
.tree li span {
  order: 3;
  padding-left: 10px;
}
.expand {
  position: relative;
  width: 14px;
  height: 14px;
  margin-left: 6px;
  border: 1px solid #888;
  background: linear-gradient(#2f5a96, #2f5a96) center / 8px 2px no-repeat, linear-gradient(#2f5a96, #2f5a96) center / 2px 8px no-repeat, #f8f8f8;
}
.expand::before {
  position: absolute;
  bottom: 14px;
  left: 5px;
  height: 13px;
  border-left: 2px dotted #888;
  content: "";
}
.chart {
  display: flex;
  flex: 1;
  min-width: 0;
  margin-right: 3px;
  background: #000;
  color: #fff;
  font-size: 15px;
  line-height: 18px;
}
.plot-col {
  display: flex;
  flex: 1;
  flex-direction: column;
  padding: 4px 0 0 5px;
}
.plot {
  position: relative;
  flex: 1;
  border: 1px solid #fff;
  box-shadow: 0 0 0 1px #777;
}
.plot svg {
  position: absolute;
  top: 0;
  left: 0;
  width: 100%;
  height: 100%;
}
.legend {
  display: flex;
  align-items: center;
  gap: 8px;
  padding: 4px 5px;
}
.legend .caret {
  border-width: 6px 6px 0;
  border-top-color: #fff;
}
.time-axis {
  display: grid;
  grid-template-columns: repeat(14, 1fr);
  height: 32px;
  margin-right: -8px;
  white-space: nowrap;
}
.time-axis span::before {
  display: block;
  height: 5px;
  border-left: 2px solid #fff;
  content: "";
}
.price-axis {
  position: relative;
  display: flex;
  flex-direction: column;
  width: 72px;
  padding: 32px 0 11px;
  font-size: 14px;
}
.price-axis span {
  display: flex;
  flex: 1;
  align-items: center;
  gap: 6px;
}
.price-axis span::before {
  width: 4px;
  height: 2px;
  background: #fff;
  content: "";
}
.price-axis b {
  position: absolute;
  bottom: 111px;
  left: 3px;
  width: 65px;
  padding-left: 7px;
  background: #fff;
  color: #222;
  font-weight: 400;
}
.terminal {
  display: flex;
  height: 257px;
  padding: 6px 3px 2px 0;
  border-top: 2px solid #fff;
  border-bottom: 2px solid #a8a8a8;
}
.terminal-handle {
  display: flex;
  flex-direction: column;
  width: 23px;
  padding: 0 2px 0 1px;
}
.terminal-handle .close {
  padding-bottom: 6px;
  line-height: 16px;
}
.terminal-handle h2 {
  flex: 1;
  padding-top: 4px;
  background: linear-gradient(#9ab4d0, #adc7e4 60%, #b5d4ea);
  font-size: 15px;
  line-height: 20px;
  transform: rotate(180deg);
  writing-mode: vertical-rl;
  text-orientation: sideways;
}
.terminal-body {
  display: flex;
  flex: 1;
  flex-direction: column;
  border: 2px solid #fff;
  border-top-color: #a8a8a8;
  border-left-color: #a8a8a8;
}
.alerts {
  flex: 1;
  background: #fff;
}
.alerts table {
  width: 716px;
  height: 38px;
  table-layout: fixed;
}
.alerts th {
  padding: 0 8px 2px 10px;
  border-right: 2px solid #e4e4e4;
  font-weight: 400;
  text-align: right;
}
.alerts th:nth-child(1) {
  width: 157px;
  text-align: left;
}
.alerts th:nth-child(2) {
  width: 189px;
  text-align: left;
}
.terminal .tabs {
  padding-left: 0;
}
.terminal .tab {
  padding: 0 0 2px;
}
.terminal .tab.on {
  padding-bottom: 0;
}
sub {
  color: #f22;
  font-size: 14px;
  line-height: 14px;
}
.status {
  display: grid;
  grid-template-columns: 776fr 184fr 160fr 112fr 113fr 107fr 109fr 104fr 231fr;
  height: 36px;
  padding-top: 4px;
  border-top: 2px solid #fff;
  line-height: 30px;
}
.status > span {
  padding-left: 8px;
  border-right: 2px solid #aaa;
}
.status .hint {
  padding-left: 3px;
  font-size: 16px;
}
.status .traffic {
  position: relative;
  display: flex;
  align-items: center;
  gap: 8px;
  border: 0;
}
.traffic svg {
  width: 36px;
  height: 21px;
}
.traffic .resize {
  position: absolute;
  right: 0;
  bottom: 0;
  width: 22px;
}
.context-menu {
  position: absolute;
  top: 753px;
  left: 781px;
  width: 334px;
  padding: 2px;
  border: 2px solid #6b6b6b;
  background: linear-gradient(90deg, #fff 2px, #f0f0f0 2px 52px, #fff 52px);
  font-size: 21px;
  line-height: 30px;
}
.context-menu li {
  position: relative;
  padding: 0 2px;
}
.context-menu button {
  display: flex;
  align-items: center;
  width: 100%;
  height: 46px;
  padding: 0 22px 0 4px;
  border: 2px solid transparent;
  color: #111;
  text-align: left;
}
.context-menu button svg {
  width: 34px;
  height: 34px;
  margin-right: 25px;
}
.context-menu button span {
  flex: 1;
  font-size: 22px;
}
.context-menu kbd {
  font: inherit;
}
.context-menu .off button {
  color: #aaa;
}
.context-menu .active {
  z-index: 1;
}
.context-menu .active button {
  border-color: #1a7fd6;
  background: #bed3e4;
  box-shadow: 0 0 0 20px #ffb8ba;
}
.context-menu hr {
  height: 2px;
  margin: 8px 2px 8px 64px;
  border: 0;
  background: #ececec;
}
</style>
